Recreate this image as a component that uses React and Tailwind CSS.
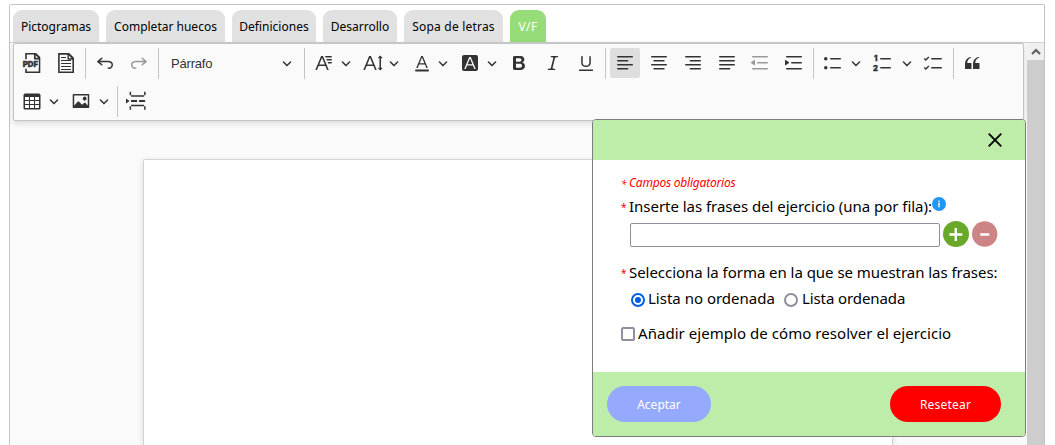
import React from "react";

const P = {
  undo: "m5.042 9.367 2.189 1.837a.75.75 0 0 1-.965 1.149l-3.788-3.18a.747.747 0 0 1-.21-.284.75.75 0 0 1 .17-.945L6.23 4.762a.75.75 0 1 1 .964 1.15L4.863 7.866h8.917A.75.75 0 0 1 14 7.9a4 4 0 1 1-1.477 7.718l.344-1.489a2.5 2.5 0 1 0 1.094-4.73l.008-.032H5.042z",
  family: "M11.03 3h6.149a.75.75 0 1 1 0 1.5h-5.514L11.03 3zm1.27 3h4.879a.75.75 0 1 1 0 1.5h-4.244L12.3 6zm1.27 3h3.609a.75.75 0 1 1 0 1.5h-2.973L13.57 9zm-2.754 2.5L8.038 4.785 5.261 11.5h5.555zm.62 1.5H4.641l-1.666 4.028H1.312l5.789-14h1.875l5.789 14h-1.663L11.436 13z",
  size: "M9.816 11.5 7.038 4.785 4.261 11.5h5.555zm.62 1.5H3.641l-1.666 4.028H.312l5.789-14h1.875l5.789 14h-1.663L10.436 13zm7.55 2.279.779-.779.707.707-2.265 2.265-2.193-2.265.707-.707.765.765V4.825c0-.042 0-.083.002-.123l-.77.77-.707-.707L17.207 2.5l2.265 2.265-.707.707-.782-.782c.002.043.003.089.003.135v10.454z",
  color: "M12.4 10.3 10 4.5l-2.4 5.8h4.8zm.5 1.2H7.1L5.7 15H4.2l5-12h1.6l5 12h-1.5L13 11.5zm3.1 7H4a1 1 0 0 1 0-2h12a1 1 0 0 1 0 2z",
  back: "M4 2h12a2 2 0 0 1 2 2v12a2 2 0 0 1-2 2H4a2 2 0 0 1-2-2V4a2 2 0 0 1 2-2zm8.38 9.262H7.62L10 5.506l2.38 5.756zm.532 1.285L14.34 16h1.426L10.804 4H9.196L4.234 16H5.66l1.428-3.453h5.824z",
  bold: "M10.187 17H5.773c-.637 0-1.092-.138-1.364-.415-.273-.277-.409-.718-.409-1.323V4.738c0-.617.14-1.062.419-1.332.279-.27.73-.406 1.354-.406h4.68c.69 0 1.288.041 1.793.124.506.083.96.242 1.36.477.341.197.644.447.906.75a3.262 3.262 0 0 1 .808 2.162c0 1.401-.722 2.426-2.167 3.075C15.05 10.175 16 11.315 16 13.01a3.756 3.756 0 0 1-2.296 3.504 6.1 6.1 0 0 1-1.517.377c-.571.073-1.238.11-2 .11zm-.217-6.217H7v4.087h3.069c1.977 0 2.965-.69 2.965-2.072 0-.707-.256-1.22-.768-1.537-.512-.319-1.277-.478-2.296-.478zM7 5.13v3.619h2.606c.729 0 1.292-.067 1.69-.2a1.6 1.6 0 0 0 .91-.765c.165-.267.247-.566.247-.897 0-.707-.26-1.176-.778-1.409-.519-.232-1.31-.348-2.375-.348H7z",
  italic: "m9.586 14.633.021.004c-.036.335.095.655.393.962.082.083.173.15.274.201h1.474a.6.6 0 1 1 0 1.2H5.304a.6.6 0 0 1 0-1.2h1.15c.474-.07.809-.182 1.005-.334.157-.122.291-.32.404-.597l2.416-9.55a1.053 1.053 0 0 0-.281-.823 1.12 1.12 0 0 0-.442-.296H8.15a.6.6 0 0 1 0-1.2h6.443a.6.6 0 1 1 0 1.2h-1.195c-.376.056-.65.155-.823.296-.215.175-.423.439-.623.79l-2.366 9.347z",
  underline: "M3 18v-1.5h14V18zm2.2-8V3.6c0-.4.4-.6.8-.6.3 0 .7.2.7.6v6.2c0 2 1.3 2.8 3.2 2.8 1.9 0 3.4-.9 3.4-2.9V3.6c0-.3.4-.5.8-.5.3 0 .7.2.7.5V10c0 2.7-2.2 4-4.9 4-2.6 0-4.7-1.2-4.7-4z",
  quote: "M3 10.423a6.5 6.5 0 0 1 6.056-6.408l.038.67C6.448 5.423 5.354 7.663 5.22 10H9c.552 0 .5.432.5.986v4.511c0 .554-.448.503-1 .503h-5c-.552 0-.5-.449-.5-1.003v-4.574zm8 0a6.5 6.5 0 0 1 6.056-6.408l.038.67c-2.646.739-3.74 2.979-3.873 5.315H17c.552 0 .5.432.5.986v4.511c0 .554-.448.503-1 .503h-5c-.552 0-.5-.449-.5-1.003v-4.574z",
  image: "M6.91 10.54c.26-.23.64-.21.88.03l3.36 3.14 2.23-2.06a.64.64 0 0 1 .87 0l2.52 2.97V4.5H3.2v10.12l3.71-4.08zm10.27-7.51c.6 0 1.09.47 1.09 1.05v11.84c0 .59-.49 1.06-1.09 1.06H2.79c-.6 0-1.09-.47-1.09-1.06V4.08c0-.58.49-1.05 1.1-1.05h14.38zm-5.22 5.56a1.96 1.96 0 1 1 3.4-1.96 1.96 1.96 0 0 1-3.4 1.96z",
  table: "M3 6v3h4V6H3zm0 4v3h4v-3H3zm0 4v3h4v-3H3zm5 3h4v-3H8v3zm5 0h4v-3h-4v3zm4-4v-3h-4v3h4zm0-4V6h-4v3h4zm1.5 8a1.5 1.5 0 0 1-1.5 1.5H3A1.5 1.5 0 0 1 1.5 17V4c.222-.863 1.068-1.5 2-1.5h13c.932 0 1.778.637 2 1.5v13zM12 13v-3H8v3h4zm0-4V6H8v3h4z",
  pageBreak: "M3.598.687h1.5v5h-1.5zm14.5 0h1.5v5h-1.5zM19.598 4.187v1.5h-16v-1.5zm-16 14.569h1.5v-5h-1.5zm14.5 0h1.5v-5h-1.5zM19.598 15.256v-1.5h-16v1.5zM5.081 9h6v2h-6zm8 0h6v2h-6zm-9.483 1L0 12.5v-5z",
};

function Glyph({ d, children }) {
  return (
    <svg viewBox="0 0 20 20" className="block size-5 flex-none fill-current">
      {d ? <path fillRule="evenodd" d={d} /> : children}
    </svg>
  );
}

function Lines({ rows }) {
  return (
    <Glyph>
      {rows.map(([x, y, w]) => (
        <rect key={y} x={x} y={y} width={w} height="1.5" rx="0.75" />
      ))}
    </Glyph>
  );
}

function Chevron() {
  return (
    <svg viewBox="0 0 10 10" className="block size-[10px] flex-none fill-current">
      <path d="M.941 4.523a.75.75 0 1 1 1.06-1.06l3.006 3.005 3.005-3.005a.75.75 0 1 1 1.06 1.06l-3.549 3.55a.75.75 0 0 1-1.168-.136L.941 4.523z" />
    </svg>
  );
}

function Button({ slot = "w-[34px]", tone = "", children }) {
  return (
    <div className={`flex-none ${slot}`}>
      <button className={`flex size-[30px] items-center justify-center rounded-[2px] ${tone}`}>{children}</button>
    </div>
  );
}

function Split({ slot = "w-[49px]", gap = "gap-[7px]", children }) {
  return (
    <div className={`flex h-[30px] flex-none items-center pl-[5px] ${slot} ${gap}`}>
      {children}
      <Chevron />
    </div>
  );
}

const Sep = ({ after = "mr-1" }) => <div className={`h-[31px] w-px flex-none bg-[#c4c4c4] ${after}`} />;

const tabs = [
  ["Pictogramas", "w-[86px]"],
  ["Completar huecos", "w-[119px]"],
  ["Definiciones", "w-[84px]"],
  ["Desarrollo", "w-[74px]"],
  ["Sopa de letras", "w-[99px] tracking-[0.2px]"],
  ["V/F", "w-[36px] tracking-[0.4px]"],
];

function Toolbar() {
  return (
    <div className="h-[78px] w-[1011px] rounded-[2px] border border-[#c4c4c4] bg-[#fafafa] pt-1 pl-[3px] text-[#333] shadow-[0_2px_6px_rgba(0,0,0,0.14)]">
      <div className="flex h-[38px] items-start">
        <Button>
          <Glyph>
            <path d="M4 6.200V.8H13.600l3.900 3.900v14.500H4v-3.500" fill="none" stroke="currentColor" strokeWidth="1.6" />
            <path d="M12 .2h2l4 4V6.500h-6z" />
            <path d="M13.600 2.200v2.600h2.600z" fill="#fafafa" />
            <rect x="0" y="7.500" width="16.600" height="7.200" fill="#fafafa" />
            <text x="0.700" y="13.900" textLength="15.500" lengthAdjust="spacingAndGlyphs" className="stroke-current stroke-[0.3] font-['Inter',sans-serif] text-[7.4px] font-black">PDF</text>
          </Glyph>
        </Button>
        <Button>
          <Glyph>
            <path d="M2.900.9H12.700l4.500 4.500v13.800H2.900z" fill="none" stroke="currentColor" strokeWidth="1.6" />
            <path d="M11.500.2H13l5 5V6.800h-6.500z" />
            <path d="M12.900 2.600v2.600h2.600z" fill="#fafafa" />
            <path d="M5 4.100h5v1H5zM5 7h10v1H5zM5 10h10v1H5zM5 13h10v1H5zM5 16h10v1H5z" />
          </Glyph>
        </Button>
        <Sep />
        <Button><Glyph d={P.undo} /></Button>
        <Button tone="-scale-x-100 text-[#999]"><Glyph d={P.undo} /></Button>
        <Sep />
        <div className="flex h-[30px] w-[141px] flex-none items-center justify-between pr-3 pl-2">
          <span className="font-['Liberation_Sans',sans-serif] text-[13px] leading-none tracking-[-0.2px]">Párrafo</span>
          <Chevron />
        </div>
        <Sep />
        <Split><Glyph d={P.family} /></Split>
        <Split gap="gap-[6px]"><Glyph d={P.size} /></Split>
        <Split slot="w-[48px]" gap="gap-[6px]"><Glyph d={P.color} /></Split>
        <Split><Glyph d={P.back} /></Split>
        <Button><Glyph d={P.bold} /></Button>
        <Button slot="w-[33px]"><Glyph d={P.italic} /></Button>
        <Button><Glyph d={P.underline} /></Button>
        <Sep />
        <Button tone="bg-[#dedede]"><Lines rows={[[2, 3, 16], [2, 7, 11.4], [2, 11, 16], [2, 15, 11.4]]} /></Button>
        <Button><Lines rows={[[2, 3, 16], [4.3, 7, 11.4], [2, 11, 16], [4.3, 15, 11.4]]} /></Button>
        <Button><Lines rows={[[2, 3, 16], [6.6, 7, 11.4], [2, 11, 16], [6.6, 15, 11.4]]} /></Button>
        <Button slot="w-[33px]"><Lines rows={[[2, 3, 16], [2, 7, 16], [2, 11, 16], [2, 15, 11.4]]} /></Button>
        <Button tone="text-[#999]">
          <Glyph><path d="M2 3.75c0 .414.336.75.75.75h14.5a.75.75 0 1 0 0-1.5H2.75a.75.75 0 0 0-.75.75zm5 6c0 .414.336.75.75.75h9.5a.75.75 0 1 0 0-1.5h-9.5a.75.75 0 0 0-.75.75zM2.75 16.5h14.5a.75.75 0 1 0 0-1.5H2.75a.75.75 0 1 0 0 1.5zm1.618-9.55L.98 9.358a.4.4 0 0 0 .013.661l3.39 2.207A.4.4 0 0 0 5 11.892V7.275a.4.4 0 0 0-.632-.326z" /></Glyph>
        </Button>
        <Button>
          <Glyph><path d="M2 3.75c0 .414.336.75.75.75h14.5a.75.75 0 1 0 0-1.5H2.75a.75.75 0 0 0-.75.75zm5 6c0 .414.336.75.75.75h9.5a.75.75 0 1 0 0-1.5h-9.5a.75.75 0 0 0-.75.75zM2.75 16.5h14.5a.75.75 0 1 0 0-1.5H2.75a.75.75 0 1 0 0 1.5zM1.632 6.95 5.02 9.358a.4.4 0 0 1-.013.661l-3.39 2.207A.4.4 0 0 1 1 11.892V7.275a.4.4 0 0 1 .632-.326z" /></Glyph>
        </Button>
        <Sep />
        <Split slot="w-[50px]" gap="gap-[8px]">
          <Glyph>
            <circle cx="2.75" cy="5.75" r="1.75" /><circle cx="2.75" cy="14.75" r="1.75" />
            <rect x="7" y="5" width="11" height="1.5" rx="0.75" /><rect x="7" y="14" width="11" height="1.5" rx="0.75" />
          </Glyph>
        </Split>
        <Split slot="w-[50px]" gap="gap-[9px]">
          <Glyph>
            <text x="0.9" y="8.1" className="stroke-current stroke-[0.3] font-['Inter',sans-serif] text-[7.6px] font-black">1</text>
            <text x="0" y="17.6" className="stroke-current stroke-[0.3] font-['Inter',sans-serif] text-[7.6px] font-black">2</text>
            <rect x="7" y="5" width="11" height="1.5" rx="0.75" /><rect x="7" y="14" width="11" height="1.5" rx="0.75" />
          </Glyph>
        </Split>
        <Button slot="w-[35px]">
          <Glyph>
            <path d="M1.3 5.6l1.5 1.4 3-3M1.3 14.6l1.5 1.4 3-3" fill="none" stroke="currentColor" strokeWidth="1.4" />
            <rect x="8" y="5" width="11" height="1.5" rx="0.75" /><rect x="8" y="14" width="11" height="1.5" rx="0.75" />
          </Glyph>
        </Button>
        <Sep after="mr-[3px]" />
        <Button><Glyph d={P.quote} /></Button>
      </div>
      <div className="flex items-start">
        <Split slot="w-[49px]"><Glyph d={P.table} /></Split>
        <Split slot="w-[51px]" gap="gap-[8px]"><Glyph d={P.image} /></Split>
        <Sep after="mr-[3px]" />
        <Button><Glyph d={P.pageBreak} /></Button>
      </div>
    </div>
  );
}

const Star = () => <span className="w-[8px] flex-none pt-[2px] text-[10px] text-[#ff0000]">*</span>;

function Dialog() {
  return (
    <section className="absolute top-[119px] left-[592px] flex h-[318px] w-[434px] flex-col overflow-hidden rounded-[4px] border border-[#7c7c7c] bg-white font-['Noto_Sans',sans-serif] text-black">
      <header className="flex h-10 flex-none items-center justify-end bg-[#beedaa] pr-[23px]">
        <svg viewBox="0 0 14 14" className="size-[14px]" fill="none" stroke="#000" strokeWidth="1.9">
          <path d="M.7.7l12.6 12.6M13.3.7L.7 13.3" />
        </svg>
      </header>
      <div className="flex h-[212px] flex-none flex-col pl-7">
        <div className="mt-[14px] flex h-[18px] items-center text-[12px] leading-[18px] text-[#ff0000] italic">
          <Star /><span className="tracking-[-0.22px]">Campos obligatorios</span>
        </div>
        <div className="mt-[3px] flex h-[22px] items-center text-[15px] leading-[22px] whitespace-nowrap">
          <Star /><span className="tracking-[-0.03px]">Inserte las frases del ejercicio (una por fila):</span>
          <svg viewBox="0 0 14 14" className="mb-[5px] size-[14px] flex-none">
            <circle cx="7" cy="7" r="7" fill="#2196f3" />
            <path d="M6.2 3.8h1.6v1.4H6.2zM6.2 6h1.6v4.2H6.2z" fill="#e6f3fe" />
          </svg>
        </div>
        <div className="mt-[4px] flex h-[26px] items-center pl-[9px]">
          <input className="mt-px h-6 w-[310px] rounded-[2px] border border-[#8f8f9d] bg-white" />
          <svg viewBox="0 0 26 26" className="ml-[3px] size-[26px] flex-none">
            <circle cx="13" cy="13" r="13" fill="#6aa82a" />
            <path d="M6.3 13.5h13M12.8 7v13" stroke="#fff" strokeWidth="2.4" />
          </svg>
          <svg viewBox="0 0 26 26" className="ml-[3px] size-[26px] flex-none">
            <circle cx="12.7" cy="13" r="12.7" fill="#cc8484" />
            <path d="M8.3 13.5h9" stroke="#fff" strokeWidth="2.4" />
          </svg>
        </div>
        <div className="mt-[14px] flex h-[22px] items-center text-[15px] leading-[22px] whitespace-nowrap">
          <Star /><span className="tracking-[-0.04px]">Selecciona la forma en la que se muestran las frases:</span>
        </div>
        <div className="mt-[4px] flex h-[22px] items-center pl-[10px] text-[15px] leading-[22px]">
          <span className="mt-[3px] mr-[3px] flex size-[14px] flex-none items-center justify-center rounded-full border-2 border-[#0060df]"><span className="size-[6px] rounded-full bg-[#0060df]" /></span>
          <span className="w-[136px] whitespace-nowrap">Lista no ordenada</span>
          <span className="mt-[3px] mr-[4px] size-[14px] flex-none rounded-full border-2 border-[#8f8f9d]" />
          <span className="tracking-[-0.1px] whitespace-nowrap">Lista ordenada</span>
        </div>
        <div className="mt-[13px] flex h-[22px] items-center text-[15px] leading-[22px] whitespace-nowrap">
          <span className="mt-px mr-[3px] size-[14px] flex-none rounded-[2px] border-2 border-[#8f8f9d]" />
          <span className="tracking-[0.05px]">Añadir ejemplo de cómo resolver el ejercicio</span>
        </div>
      </div>
      <footer className="flex flex-1 items-start justify-between bg-[#beedaa] pt-[14px] pr-6 pl-[14px] text-[12px] text-white">
        <button className="h-9 w-[104px] rounded-full bg-[#95a9ff] pt-px">Aceptar</button>
        <button className="h-9 w-[111px] rounded-full bg-[#ff0000] pt-px tracking-[0.2px]">Resetear</button>
      </footer>
    </section>
  );
}

export default function App() {
  return (
    <div className="relative h-[445px] w-[1055px] overflow-hidden bg-white pt-1 pl-[9px]">
      <div className="flex h-[441px] w-[1036px] flex-col rounded-t-[2px] border border-b-0 border-[#c4c4c4]">
        <nav className="flex h-[38px] flex-none items-start gap-[7px] border-b border-[#d0d0d0] pt-[5px] pl-[3px] font-['Noto_Sans',sans-serif] text-[12px] text-black">
          {tabs.map(([label, w]) => (
            <div key={label} className={`flex h-8 flex-none items-center justify-center rounded-t-[9px] pt-px whitespace-nowrap ${w} ${label === "V/F" ? "bg-[#96dc78] text-white" : "bg-[#e1e1e1]"}`}>
              {label}
            </div>
          ))}
        </nav>
        <div className="flex min-h-0 flex-1">
          <main className="flex min-w-0 flex-1 flex-col bg-[#fafafa] pl-[3px]">
            <Toolbar />
            <div className="mt-[38px] ml-[130px] w-[750px] flex-1 rounded-t-[2px] border border-b-0 border-[#d3d3d3] bg-white shadow-[0_2px_6px_rgba(0,0,0,0.12)]" />
          </main>
          <aside className="w-[17px] flex-none bg-[#cdcdcd]">
            <div className="flex h-[17px] items-center justify-center bg-[#f0f0f0]">
              <svg viewBox="0 0 10 8" className="h-2 w-[10px]" fill="none" stroke="#606060" strokeWidth="2.2"><path d="M1 6l4-4 4 4" /></svg>
            </div>
          </aside>
        </div>
      </div>
      <Dialog />
    </div>
  );
}
